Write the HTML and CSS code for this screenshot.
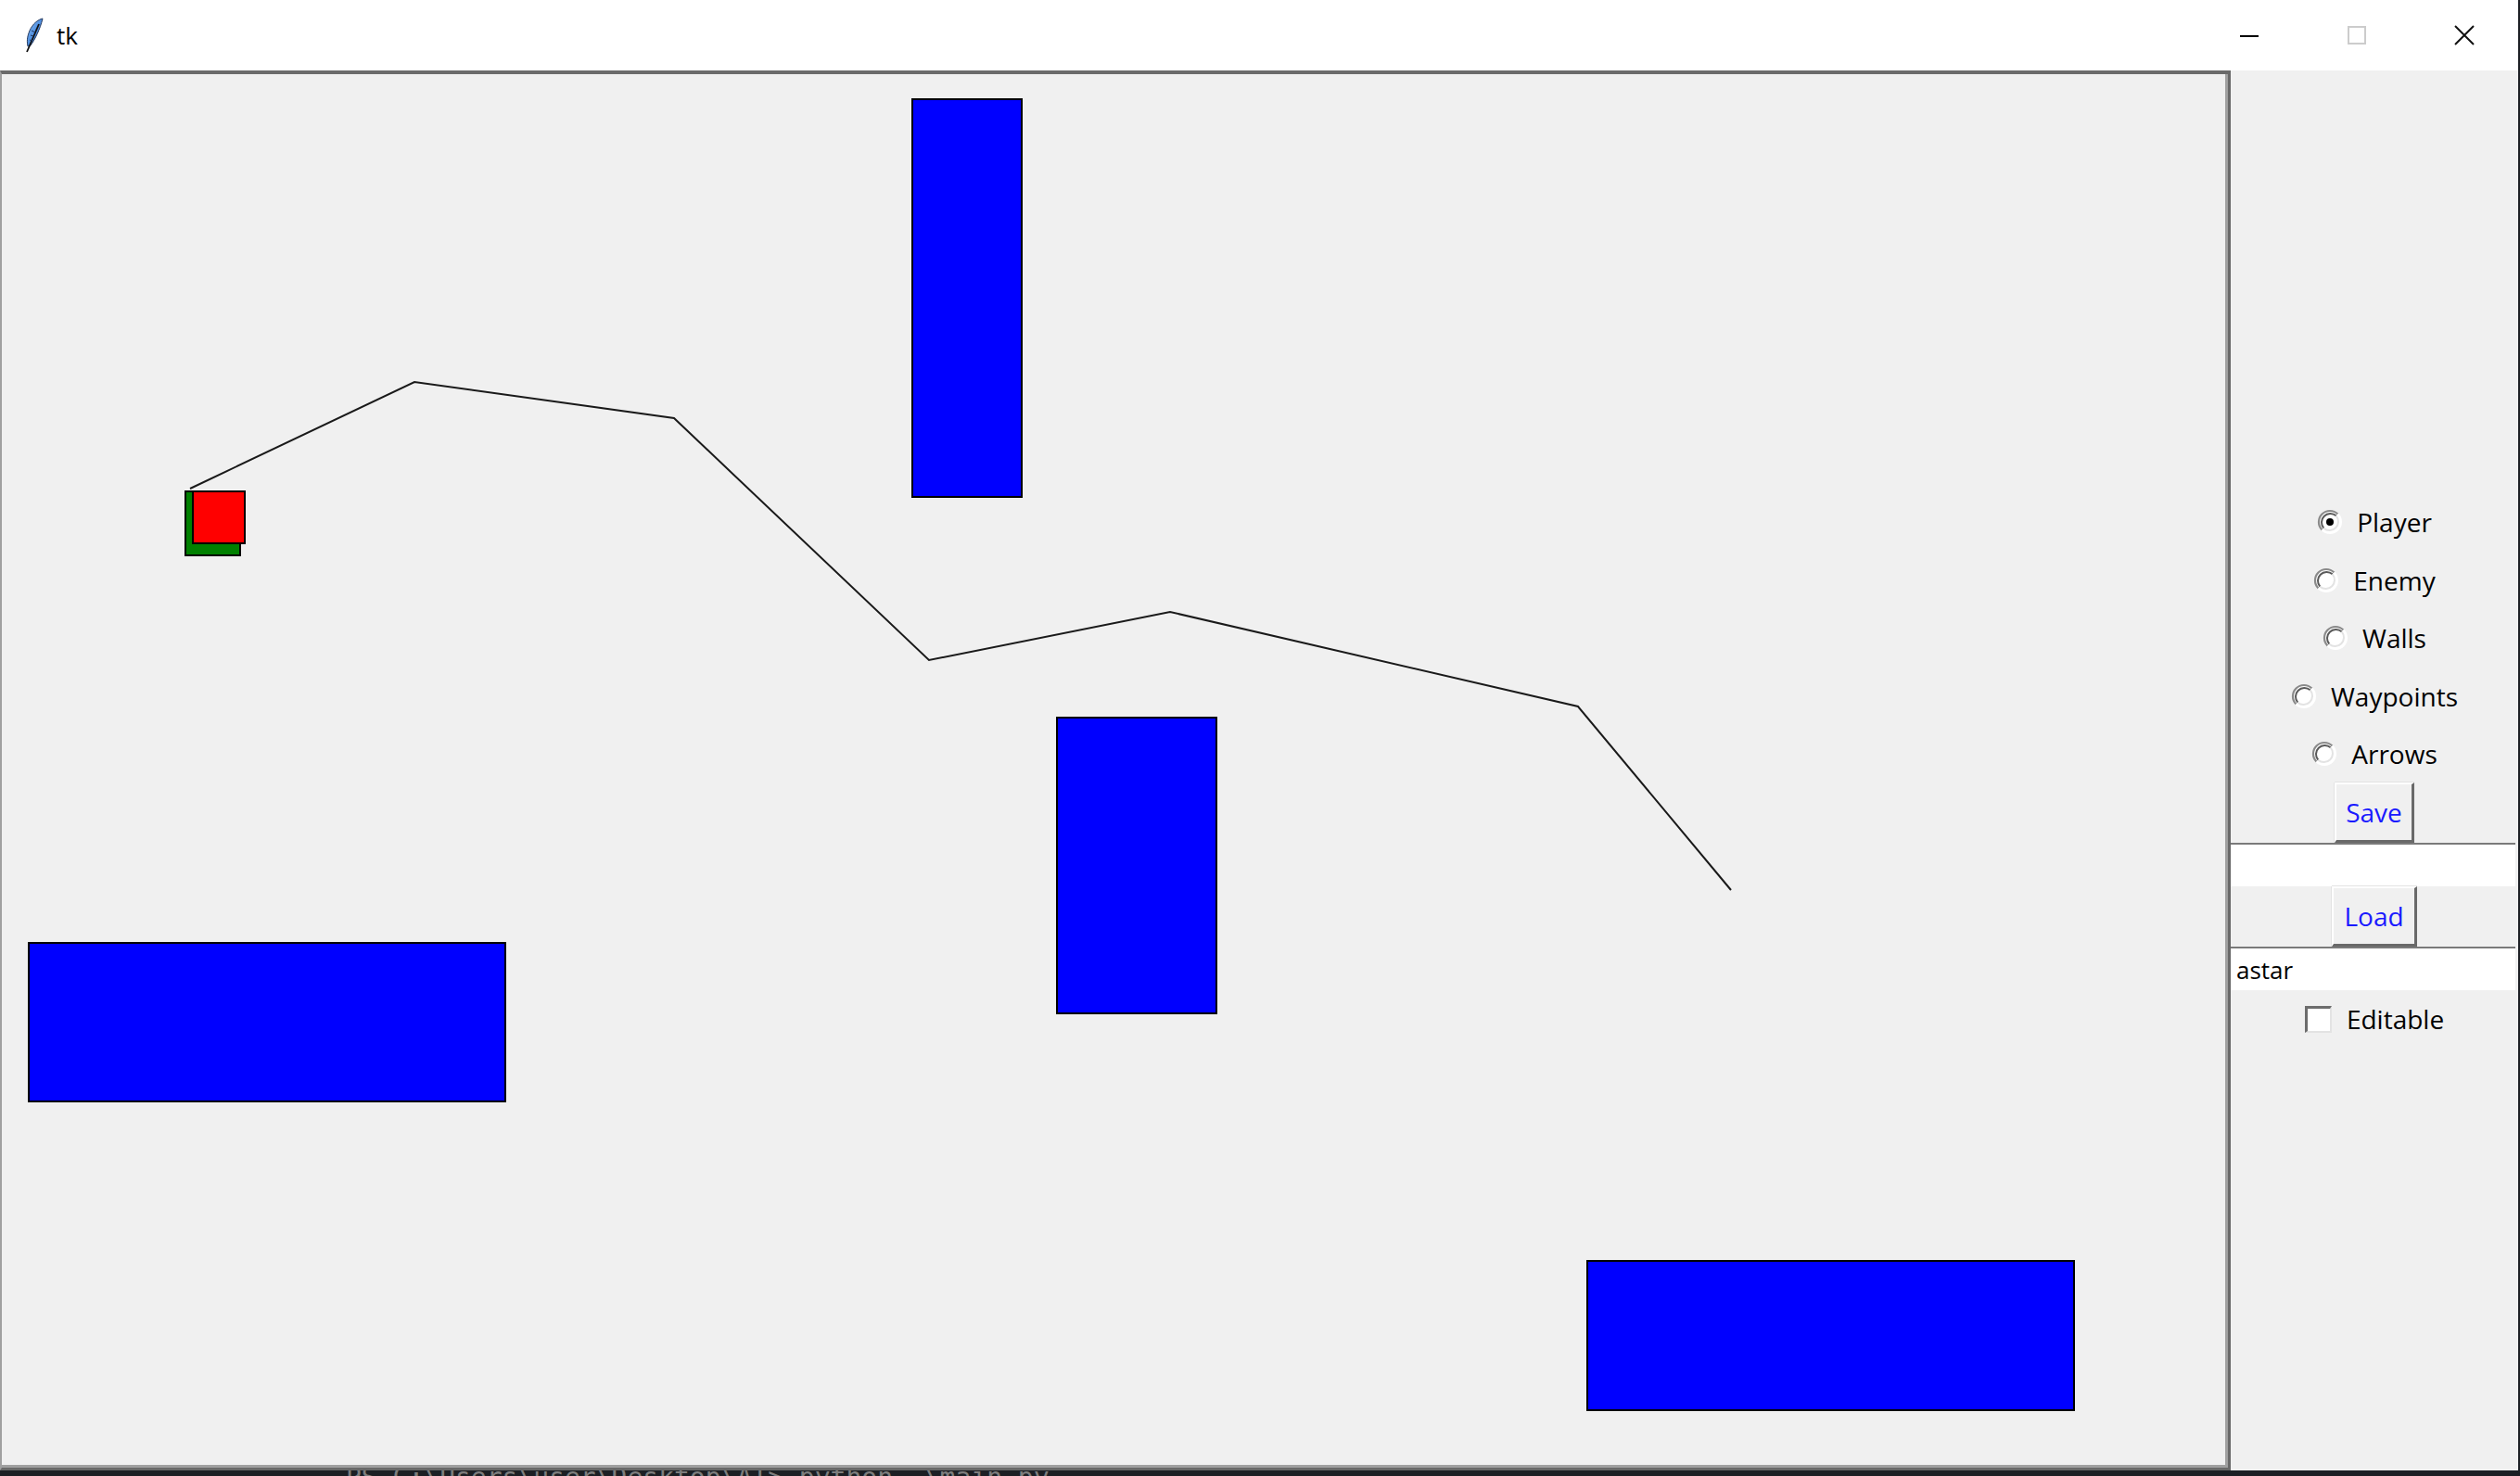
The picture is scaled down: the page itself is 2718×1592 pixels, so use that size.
FILE: index.html
```html
<!DOCTYPE html>
<html lang="en">
<head>
<meta charset="utf-8">
<title>tk</title>
<link rel="stylesheet" href="styles.css">
</head>
<body>
<div class="window">
  <header class="titlebar">
    <div class="title-left">
      <svg class="tk-icon" viewBox="0 0 22 38" width="22" height="38">
        <defs>
          <linearGradient id="fg" x1="0" y1="0" x2="1" y2="1">
            <stop offset="0" stop-color="#8fc0f5"/>
            <stop offset="0.5" stop-color="#4f8fe0"/>
            <stop offset="1" stop-color="#2a5aa8"/>
          </linearGradient>
        </defs>
        <path d="M21 1 C 16 2 10 7 7 14 C 4 21 4 26 5 31 L 8 30 C 13 23 18 13 21 1 Z" fill="url(#fg)" stroke="#23385e" stroke-width="1"/>
        <path d="M17 7 L 4 37" stroke="#111" stroke-width="1.8" fill="none"/>
        <path d="M9 14 L 13 16 M8 19 L 11 20 M7 24 L 10 25" stroke="#1d3560" stroke-width="1" fill="none"/>
      </svg>
      <span class="title">tk</span>
    </div>
    <div class="controls">
      <span class="ctl">
        <svg width="20" height="20" viewBox="0 0 20 20"><path d="M0 11 H20" stroke="#000" stroke-width="2"/></svg>
      </span>
      <span class="ctl">
        <svg width="20" height="20" viewBox="0 0 20 20"><rect x="1" y="1" width="18" height="18" fill="none" stroke="#cccccc" stroke-width="2"/></svg>
      </span>
      <span class="ctl">
        <svg width="22" height="22" viewBox="0 0 22 22"><path d="M1 1 L21 21 M21 1 L1 21" stroke="#111" stroke-width="2"/></svg>
      </span>
    </div>
  </header>
  <div class="client">
    <div class="canvas-outer">
      <div class="canvas-inner">
        <svg class="scene" width="2398" height="1500" viewBox="2 80 2398 1500">
          <g class="walls" fill="#0000ff" stroke="#000" stroke-width="2" shape-rendering="crispEdges">
            <rect x="984" y="107" width="118" height="429"/>
            <rect x="1140" y="774" width="172" height="319"/>
            <rect x="31" y="1017" width="514" height="171"/>
            <rect x="1712" y="1360" width="525" height="161"/>
          </g>
          <rect x="200" y="530" width="59" height="69" fill="#008000" stroke="#000" stroke-width="2" shape-rendering="crispEdges"/>
          <rect x="208" y="530" width="56" height="56" fill="#ff0000" stroke="#000" stroke-width="2" shape-rendering="crispEdges"/>
          <polyline points="205,527 447,412 727,451 1002,712 1262,660 1702,762 1867,960" fill="none" stroke="#1a1a1a" stroke-width="2"/>
        </svg>
      </div>
    </div>
    <aside class="panel">
      <label class="radio-row">
        <svg class="radio" width="28" height="28" viewBox="0 0 28 28">
          <circle cx="14" cy="14" r="12" fill="#fff"/>
          <path d="M5.5 22.5 A12 12 0 0 1 22.5 5.5" stroke="#8a8a8a" stroke-width="2.2" fill="none"/>
          <path d="M7.3 20.7 A9.5 9.5 0 0 1 20.7 7.3" stroke="#5a5a5a" stroke-width="2" fill="none"/>
          <path d="M22.5 5.5 A12 12 0 0 1 5.5 22.5" stroke="#ffffff" stroke-width="2" fill="none"/>
          <path d="M20.7 7.3 A9.5 9.5 0 0 1 7.3 20.7" stroke="#e3e3e3" stroke-width="2" fill="none"/>
          <circle cx="14" cy="14" r="4" fill="#000"/>
        </svg>
        <span class="label">Player</span>
      </label>
      <label class="radio-row">
        <svg class="radio" width="28" height="28" viewBox="0 0 28 28">
          <circle cx="14" cy="14" r="12" fill="#fff"/>
          <path d="M5.5 22.5 A12 12 0 0 1 22.5 5.5" stroke="#8a8a8a" stroke-width="2.2" fill="none"/>
          <path d="M7.3 20.7 A9.5 9.5 0 0 1 20.7 7.3" stroke="#5a5a5a" stroke-width="2" fill="none"/>
          <path d="M22.5 5.5 A12 12 0 0 1 5.5 22.5" stroke="#ffffff" stroke-width="2" fill="none"/>
          <path d="M20.7 7.3 A9.5 9.5 0 0 1 7.3 20.7" stroke="#e3e3e3" stroke-width="2" fill="none"/>
        </svg>
        <span class="label">Enemy</span>
      </label>
      <label class="radio-row">
        <svg class="radio" width="28" height="28" viewBox="0 0 28 28">
          <circle cx="14" cy="14" r="12" fill="#fff"/>
          <path d="M5.5 22.5 A12 12 0 0 1 22.5 5.5" stroke="#8a8a8a" stroke-width="2.2" fill="none"/>
          <path d="M7.3 20.7 A9.5 9.5 0 0 1 20.7 7.3" stroke="#5a5a5a" stroke-width="2" fill="none"/>
          <path d="M22.5 5.5 A12 12 0 0 1 5.5 22.5" stroke="#ffffff" stroke-width="2" fill="none"/>
          <path d="M20.7 7.3 A9.5 9.5 0 0 1 7.3 20.7" stroke="#e3e3e3" stroke-width="2" fill="none"/>
        </svg>
        <span class="label">Walls</span>
      </label>
      <label class="radio-row">
        <svg class="radio" width="28" height="28" viewBox="0 0 28 28">
          <circle cx="14" cy="14" r="12" fill="#fff"/>
          <path d="M5.5 22.5 A12 12 0 0 1 22.5 5.5" stroke="#8a8a8a" stroke-width="2.2" fill="none"/>
          <path d="M7.3 20.7 A9.5 9.5 0 0 1 20.7 7.3" stroke="#5a5a5a" stroke-width="2" fill="none"/>
          <path d="M22.5 5.5 A12 12 0 0 1 5.5 22.5" stroke="#ffffff" stroke-width="2" fill="none"/>
          <path d="M20.7 7.3 A9.5 9.5 0 0 1 7.3 20.7" stroke="#e3e3e3" stroke-width="2" fill="none"/>
        </svg>
        <span class="label">Waypoints</span>
      </label>
      <label class="radio-row">
        <svg class="radio" width="28" height="28" viewBox="0 0 28 28">
          <circle cx="14" cy="14" r="12" fill="#fff"/>
          <path d="M5.5 22.5 A12 12 0 0 1 22.5 5.5" stroke="#8a8a8a" stroke-width="2.2" fill="none"/>
          <path d="M7.3 20.7 A9.5 9.5 0 0 1 20.7 7.3" stroke="#5a5a5a" stroke-width="2" fill="none"/>
          <path d="M22.5 5.5 A12 12 0 0 1 5.5 22.5" stroke="#ffffff" stroke-width="2" fill="none"/>
          <path d="M20.7 7.3 A9.5 9.5 0 0 1 7.3 20.7" stroke="#e3e3e3" stroke-width="2" fill="none"/>
        </svg>
        <span class="label">Arrows</span>
      </label>
      <div class="btn-row"><span class="btn btn-save">Save</span></div>
      <div class="entry"></div>
      <div class="btn-row"><span class="btn btn-load">Load</span></div>
      <div class="entry"><span class="entry-text">astar</span></div>
      <label class="check-row">
        <span class="checkbox"></span>
        <span class="label">Editable</span>
      </label>
    </aside>
  </div>
</div>
<div class="taskbar"><span class="taskbar-text">PS C:\Users\user\Desktop\AI&gt; python .\main.py</span></div>
</body>
</html>
```
FILE: styles.css
```css
html, body {
  margin: 0;
  padding: 0;
}
body {
  background: #1c1f24;
  width: 2718px;
  height: 1592px;
  overflow: hidden;
  font-family: "Open Sans", "Noto Sans", sans-serif;
}
.window {
  width: 2716px;
  height: 1586px;
  display: flex;
  flex-direction: column;
  background: #f0f0f0;
}
.titlebar {
  height: 76px;
  flex: none;
  background: #ffffff;
  display: flex;
  align-items: center;
  justify-content: space-between;
}
.title-left {
  display: flex;
  align-items: center;
  padding-left: 25px;
  gap: 14px;
}
.tk-icon {
  display: block;
}
.title {
  font-size: 26px;
  color: #000;
  line-height: 1;
}
.controls {
  display: flex;
  height: 76px;
}
.ctl {
  width: 116px;
  height: 76px;
  display: flex;
  align-items: center;
  justify-content: center;
}
.ctl svg {
  display: block;
}
.client {
  flex: 1;
  display: flex;
  min-height: 0;
}
.canvas-outer {
  width: 2406px;
  flex: none;
  box-sizing: border-box;
  border-top: 4px solid #6b6b6b;
  border-left: 2px solid #a0a0a0;
  border-right: 3px solid #696969;
  border-bottom: 3px solid #696969;
  display: flex;
}
.canvas-inner {
  flex: 1;
  border-right: 3px solid #a0a0a0;
  border-bottom: 3px solid #a0a0a0;
  background: #f0f0f0;
  overflow: hidden;
}
.scene {
  display: block;
}
.panel {
  flex: 1;
  display: flex;
  flex-direction: column;
  justify-content: center;
  background: #f0f0f0;
}
.radio-row {
  height: 62.5px;
  display: flex;
  align-items: center;
  justify-content: center;
  gap: 15px;
}
.radio {
  display: block;
  flex: none;
}
.label {
  font-size: 28px;
  line-height: 1;
  color: #000;
}
.btn-row {
  height: 65px;
  display: flex;
  justify-content: center;
}
.btn {
  box-sizing: border-box;
  height: 65px;
  display: flex;
  align-items: center;
  justify-content: center;
  font-size: 28px;
  color: #1a1aff;
  background: #f0f0f0;
  border-top: 2px solid #ffffff;
  border-left: 2px solid #ffffff;
  border-right: 3px solid #696969;
  border-bottom: 3px solid #696969;
  box-shadow: 0 -1px 0 #e3e3e3, -1px 0 0 #e3e3e3;
}
.btn-save {
  width: 86px;
}
.btn-load {
  width: 92px;
}
.entry {
  height: 47px;
  box-sizing: border-box;
  margin-right: 3px;
  background: #ffffff;
  border-top: 2px solid #7a7a7a;
  display: flex;
  align-items: center;
  padding-left: 6px;
}
.entry-text {
  font-size: 26px;
  line-height: 1;
  color: #000;
}
.check-row {
  height: 62px;
  display: flex;
  align-items: center;
  justify-content: center;
  gap: 16px;
}
.checkbox {
  width: 29px;
  height: 29px;
  box-sizing: border-box;
  background: #ffffff;
  border-top: 3px solid #6d6d6d;
  border-left: 3px solid #6d6d6d;
  border-right: 2px solid #e3e3e3;
  border-bottom: 2px solid #e3e3e3;
}
.taskbar {
  height: 6px;
  overflow: hidden;
  padding-left: 373px;
  background: #1c1f24;
}
.taskbar-text {
  display: block;
  margin-top: -6px;
  font-size: 28px;
  line-height: 28px;
  color: #7d7d7d;
  font-family: "DejaVu Sans Mono", monospace;
  white-space: nowrap;
}
```
